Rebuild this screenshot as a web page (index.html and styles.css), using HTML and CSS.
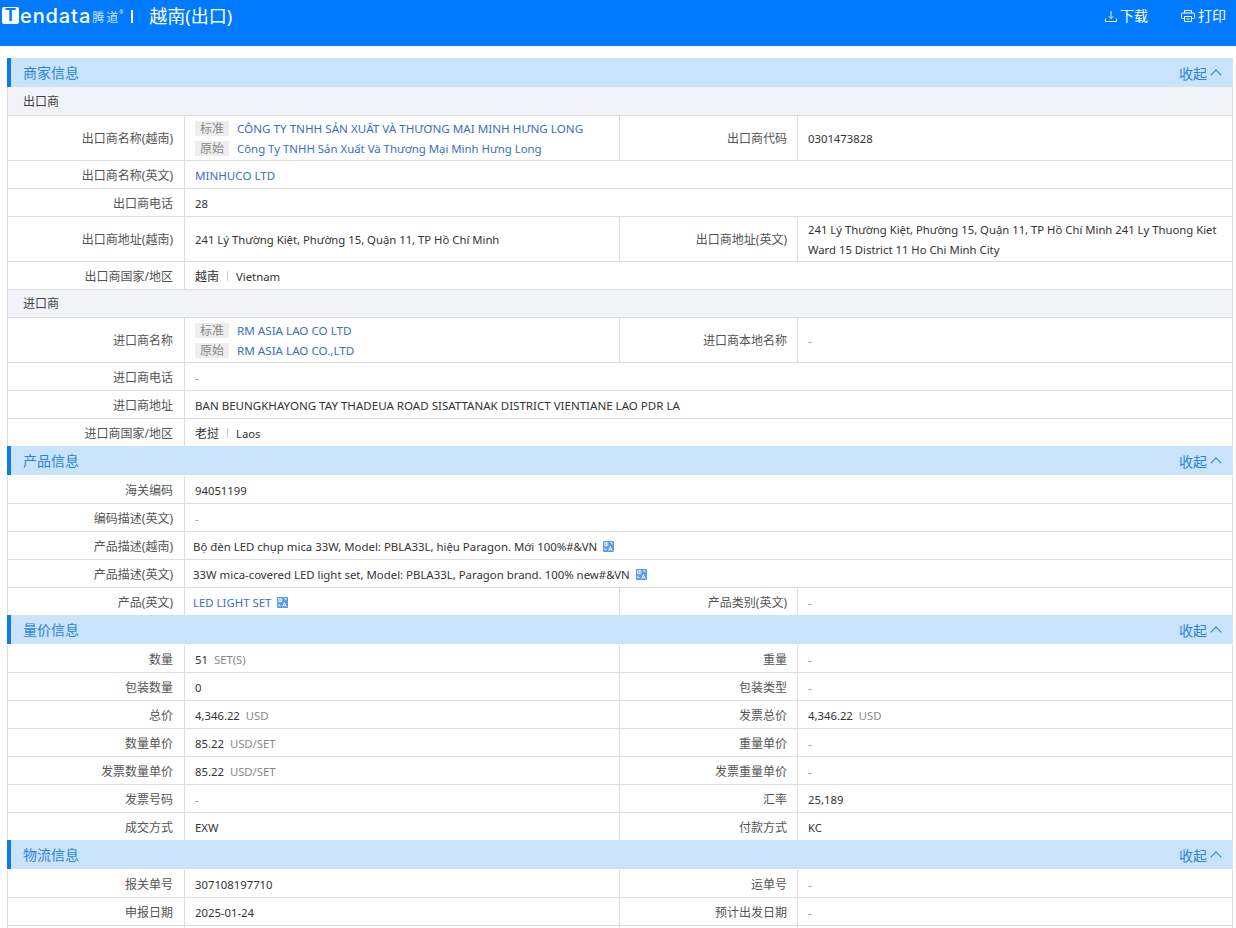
FILE: index.html
```html
<!DOCTYPE html>
<html lang="zh-CN">
<head>
    <meta charset="UTF-8">
    <title>越南(出口)</title>
    <link rel="stylesheet" href="styles.css">
</head>
<body>
    <svg class="defs" width="0" height="0">
        <symbol id="trans" viewBox="0 0 11 11">
            <rect width="11" height="11" rx="1" fill="#5a9be8"/>
            <path d="M1.6 1.8h3.2v2.8H1.6zM3.2 1v4.4M7 1.6h2v1.6M1.8 6.8v1.9h1.9" fill="none" stroke="#fff" stroke-width=".8"/>
            <path d="M5.6 9.8l1.8-4.2 1.8 4.2M6.2 8.4h2.4" fill="none" stroke="#fff" stroke-width=".9"/>
        </symbol>
    </svg>

    <header class="topbar">
        <div class="logo">
            <span class="logo-t">T</span><span class="logo-word">endata</span><span class="logo-cn">腾道</span><span class="logo-r">®</span>
        </div>
        <span class="sep"></span>
        <span class="page-title">越南(出口)</span>
        <div class="actions">
            <a class="action">
                <svg width="12" height="11" viewBox="0 0 12 11" fill="none" stroke="#fff"><path d="M6 0v7.5M3.8 5.4L6 7.6l2.2-2.2M.5 7.5v3h11v-3"/></svg>
                下载
            </a>
            <a class="action">
                <svg width="14" height="12" viewBox="0 0 14 12" fill="none" stroke="#fff"><path d="M3.5 3V.5h7V3M3 8.5H1.5a1 1 0 0 1-1-1V4a1 1 0 0 1 1-1h11a1 1 0 0 1 1 1v3.5a1 1 0 0 1-1 1H11M3.5 6.5h7v5h-7zM5.5 9h3"/></svg>
                打印
            </a>
        </div>
    </header>

    <main class="content">
        <section>
            <div class="sec-head"><h2>商家信息</h2><span class="toggle">收起<i class="chev"></i></span></div>
            <div class="sub-head first">出口商</div>
            <table>
                <colgroup><col class="c-l"><col class="c-v"><col class="c-l"><col></colgroup>
                <tr class="tall">
                    <th>出口商名称(越南)</th>
                    <td>
                        <div class="pair"><span class="tag">标准</span><a class="caps">CÔNG TY TNHH SẢN XUẤT VÀ THƯƠNG MẠI MINH HƯNG LONG</a></div>
                        <div class="pair"><span class="tag">原始</span><a>Công Ty TNHH Sản Xuất Và Thương Mại Minh Hưng Long</a></div>
                    </td>
                    <th>出口商代码</th>
                    <td>0301473828</td>
                </tr>
                <tr><th>出口商名称(英文)</th><td colspan="3"><a class="caps">MINHUCO LTD</a></td></tr>
                <tr><th>出口商电话</th><td colspan="3">28</td></tr>
                <tr class="tall">
                    <th>出口商地址(越南)</th>
                    <td>241 Lý Thường Kiệt, Phường 15, Quận 11, TP Hồ Chí Minh</td>
                    <th>出口商地址(英文)</th>
                    <td>241 Lý Thường Kiệt, Phường 15, Quận 11, TP Hồ Chí Minh 241 Ly Thuong Kiet Ward 15 District 11 Ho Chi Minh City</td>
                </tr>
                <tr class="border-last"><th>出口商国家/地区</th><td colspan="3"><span class="cn">越南</span><span class="bar"></span>Vietnam</td></tr>
            </table>
            <div class="sub-head">进口商</div>
            <table>
                <colgroup><col class="c-l"><col class="c-v"><col class="c-l"><col></colgroup>
                <tr class="tall">
                    <th>进口商名称</th>
                    <td>
                        <div class="pair"><span class="tag">标准</span><a class="caps">RM ASIA LAO CO LTD</a></div>
                        <div class="pair"><span class="tag">原始</span><a class="caps">RM ASIA LAO CO.,LTD</a></div>
                    </td>
                    <th>进口商本地名称</th>
                    <td class="none">-</td>
                </tr>
                <tr><th>进口商电话</th><td colspan="3" class="none">-</td></tr>
                <tr><th>进口商地址</th><td colspan="3" class="caps">BAN BEUNGKHAYONG TAY THADEUA ROAD SISATTANAK DISTRICT VIENTIANE LAO PDR LA</td></tr>
                <tr class="short"><th>进口商国家/地区</th><td colspan="3"><span class="cn">老挝</span><span class="bar"></span>Laos</td></tr>
            </table>
        </section>

        <section>
            <div class="sec-head"><h2>产品信息</h2><span class="toggle">收起<i class="chev"></i></span></div>
            <table>
                <colgroup><col class="c-l"><col class="c-v"><col class="c-l"><col></colgroup>
                <tr><th>海关编码</th><td colspan="3">94051199</td></tr>
                <tr><th>编码描述(英文)</th><td colspan="3" class="none">-</td></tr>
                <tr><th>产品描述(越南)</th><td colspan="3" class="tight">Bộ đèn LED chụp mica 33W, Model: PBLA33L, hiệu Paragon. Mới 100%#&amp;VN<svg class="tr"><use href="#trans"/></svg></td></tr>
                <tr><th>产品描述(英文)</th><td colspan="3" class="tight">33W mica-covered LED light set, Model: PBLA33L, Paragon brand. 100% new#&amp;VN<svg class="tr"><use href="#trans"/></svg></td></tr>
                <tr><th>产品(英文)</th><td class="tight"><a>LED LIGHT SET</a><svg class="tr"><use href="#trans"/></svg></td><th>产品类别(英文)</th><td class="none">-</td></tr>
            </table>
        </section>

        <section>
            <div class="sec-head"><h2>量价信息</h2><span class="toggle">收起<i class="chev"></i></span></div>
            <table>
                <colgroup><col class="c-l"><col class="c-v"><col class="c-l"><col></colgroup>
                <tr><th>数量</th><td>51<span class="unit">SET(S)</span></td><th>重量</th><td class="none">-</td></tr>
                <tr><th>包装数量</th><td>0</td><th>包装类型</th><td class="none">-</td></tr>
                <tr><th>总价</th><td>4,346.22<span class="unit">USD</span></td><th>发票总价</th><td>4,346.22<span class="unit">USD</span></td></tr>
                <tr><th>数量单价</th><td>85.22<span class="unit">USD/SET</span></td><th>重量单价</th><td class="none">-</td></tr>
                <tr><th>发票数量单价</th><td>85.22<span class="unit">USD/SET</span></td><th>发票重量单价</th><td class="none">-</td></tr>
                <tr><th>发票号码</th><td class="none">-</td><th>汇率</th><td>25,189</td></tr>
                <tr><th>成交方式</th><td>EXW</td><th>付款方式</th><td>KC</td></tr>
            </table>
        </section>

        <section>
            <div class="sec-head"><h2>物流信息</h2><span class="toggle">收起<i class="chev"></i></span></div>
            <table>
                <colgroup><col class="c-l"><col class="c-v"><col class="c-l"><col></colgroup>
                <tr><th>报关单号</th><td>307108197710</td><th>运单号</th><td class="none">-</td></tr>
                <tr><th>申报日期</th><td>2025-01-24</td><th>预计出发日期</th><td class="none">-</td></tr>
                <tr><th></th><td></td><th></th><td></td></tr>
            </table>
        </section>
    </main>
</body>
</html>
```

FILE: styles.css
```css
* {
    margin: 0;
    padding: 0;
    box-sizing: border-box;
}

html, body {
    height: 928px;
    overflow: hidden;
}

body {
    font-family: "Noto Sans", "Noto Sans CJK SC", sans-serif;
    font-size: 12px;
    color: #333;
    background: #fff;
}

.defs {
    position: absolute;
}

.topbar {
    display: flex;
    align-items: flex-start;
    height: 46px;
    padding: 4px 10px 0 2px;
    background: #007aff;
    color: #fff;
}

.logo {
    display: flex;
    align-items: center;
    height: 24px;
}

.logo-t {
    width: 17px;
    height: 17px;
    margin-top: -1px;
    border-radius: 2px;
    background: #fff;
    color: #007aff;
    font: 700 17px/17px "Inter", sans-serif;
    text-align: center;
}

.logo-word {
    margin-left: 1px;
    font: 500 20px/24px "Inter", sans-serif;
    letter-spacing: .9px;
}

.logo-cn {
    margin-left: 1px;
    margin-top: 2px;
    font-size: 12px;
    letter-spacing: 2px;
    opacity: .8;
}

.logo-r {
    align-self: flex-start;
    margin: 5px 0 0 -1px;
    font-size: 5px;
    line-height: 6px;
}

.sep {
    width: 2px;
    height: 13px;
    margin: 6px 16px 0 8px;
    background: #fff;
}

.page-title {
    font-size: 18px;
    line-height: 24px;
}

.actions {
    display: flex;
    gap: 33px;
    margin-left: auto;
    line-height: 24px;
    font-size: 14px;
}

.action {
    display: flex;
    align-items: center;
    gap: 3px;
    color: #fff;
}

.content {
    padding: 12px 3px 0 7px;
}

.sec-head {
    display: flex;
    align-items: center;
    justify-content: space-between;
    height: 29px;
    padding: 0 11px 0 12px;
    background: #c9e3fb;
    border-left: 4px solid #0d7be0;
    color: #2b83d8;
}

.sec-head h2 {
    margin-bottom: 2px;
    font-size: 14px;
    font-weight: 400;
}

.toggle {
    display: flex;
    align-items: center;
    font-size: 14px;
}

.chev {
    width: 8px;
    height: 8px;
    margin: 5px 2px 0 5px;
    border-top: 1px solid #2b83d8;
    border-left: 1px solid #2b83d8;
    transform: rotate(45deg);
}

.sub-head {
    height: 28px;
    padding-left: 15px;
    line-height: 27px;
    background: #f2f3f8;
    border: 1px solid #ddd;
    border-width: 0 1px 1px;
    color: #444;
}

.sub-head.first {
    height: 29px;
    line-height: 29px;
}

table {
    width: 100%;
    table-layout: fixed;
    border-collapse: separate;
    border-spacing: 0;
}

.sec-head + table {
    margin-top: 1px;
}

.c-l {
    width: 178px;
}

.c-v {
    width: 435px;
}

tr {
    height: 28px;
}

tr.tall {
    height: 45px;
}

tr.short, .sec-head + table tr:last-child {
    height: 27px;
}

th, td {
    padding: 2px 10px 0;
    border-right: 1px solid #ddd;
    border-bottom: 1px solid #ddd;
    line-height: 20px;
    vertical-align: middle;
}

th:first-child {
    padding-right: 11px;
    border-left: 1px solid #ddd;
}

tr:last-child th, tr:last-child td {
    border-bottom: none;
}

tr.border-last th, tr.border-last td {
    border-bottom: 1px solid #ddd;
}

th {
    text-align: right;
    font-weight: 400;
    color: #555;
}

td {
    font-size: 11.3px;
}

td.tight {
    padding-left: 8px;
    font-size: 11.4px;
}

td.none {
    color: #999;
}

td.caps {
    font-size: 11.55px;
}

a.caps {
    font-size: 11.6px;
}

a {
    color: #3c6ebf;
}

.cn {
    font-size: 12px;
}

.pair {
    height: 20px;
}

.pair a {
    font-size: 11.4px;
}

.pair a.caps {
    font-size: 11.65px;
}

.tag {
    display: inline-block;
    width: 34px;
    height: 15px;
    margin-right: 8px;
    background: #eee;
    color: #888;
    font-size: 12px;
    line-height: 15px;
    text-align: center;
}

.bar {
    display: inline-block;
    width: 1px;
    height: 10px;
    margin: 0 8px;
    background: #ccc;
}

.unit {
    margin-left: 6px;
    color: #888;
}

.tr {
    width: 11px;
    height: 11px;
    margin-left: 6px;
    vertical-align: -1px;
}
```
